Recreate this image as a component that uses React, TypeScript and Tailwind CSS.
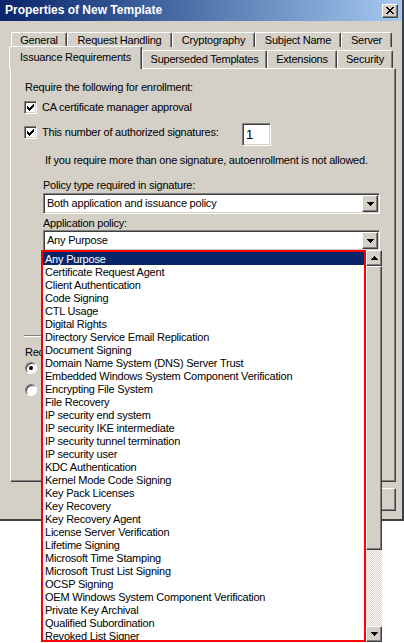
import * as React from "react";

// classic 3D borders
const RAISED =
  "border border-t-white border-l-white border-r-[#404040] border-b-[#404040] shadow-[inset_-1px_-1px_#808080]";
const SUNKEN =
  "border border-t-[#808080] border-l-[#808080] border-r-white border-b-white shadow-[inset_1px_1px_#404040,inset_-1px_-1px_#d4d0c8]";
const TAB =
  "rounded-t-[2px] border-l border-t border-r border-l-white border-t-white border-r-[#404040] shadow-[inset_-1px_0_#808080] text-center whitespace-nowrap";

const BACK_TABS = [
  {label: "General", w: "w-[56px]"},
  {label: "Request Handling", w: "w-[105px]"},
  {label: "Cryptography", w: "w-[83px]"},
  {label: "Subject Name", w: "w-[86px]"},
  {label: "Server", w: "w-[51px]"},
];

const FRONT_TABS = [
  {label: "Superseded Templates", w: "w-[125px]"},
  {label: "Extensions", w: "w-[70px]"},
  {label: "Security", w: "w-[56px]"},
];

const POLICIES = [
  "Any Purpose",
  "Certificate Request Agent",
  "Client Authentication",
  "Code Signing",
  "CTL Usage",
  "Digital Rights",
  "Directory Service Email Replication",
  "Document Signing",
  "Domain Name System (DNS) Server Trust",
  "Embedded Windows System Component Verification",
  "Encrypting File System",
  "File Recovery",
  "IP security end system",
  "IP security IKE intermediate",
  "IP security tunnel termination",
  "IP security user",
  "KDC Authentication",
  "Kernel Mode Code Signing",
  "Key Pack Licenses",
  "Key Recovery",
  "Key Recovery Agent",
  "License Server Verification",
  "Lifetime Signing",
  "Microsoft Time Stamping",
  "Microsoft Trust List Signing",
  "OCSP Signing",
  "OEM Windows System Component Verification",
  "Private Key Archival",
  "Qualified Subordination",
  "Revoked List Signer",
];

const Arrow: React.FC<{up?: boolean}> = ({up}) => (
  <svg width="7" height="4" viewBox="0 0 7 4" shapeRendering="crispEdges">
    {up ? (
      <>
        <rect x="3" y="0" width="1" height="1" />
        <rect x="2" y="1" width="3" height="1" />
        <rect x="1" y="2" width="5" height="1" />
        <rect x="0" y="3" width="7" height="1" />
      </>
    ) : (
      <>
        <rect x="0" y="0" width="7" height="1" />
        <rect x="1" y="1" width="5" height="1" />
        <rect x="2" y="2" width="3" height="1" />
        <rect x="3" y="3" width="1" height="1" />
      </>
    )}
  </svg>
);

const Checkbox: React.FC = () => (
  <div className={`${SUNKEN} flex h-[13px] w-[13px] shrink-0 items-center justify-center bg-white`}>
    <svg width="7" height="7" viewBox="0 0 7 7" shapeRendering="crispEdges">
      <path d="M0 2h1v3h-1zM1 3h1v3h-1zM2 4h1v3h-1zM3 3h1v3h-1zM4 2h1v3h-1zM5 1h1v3h-1zM6 0h1v3h-1z" fill="black" />
    </svg>
  </div>
);

const Radio: React.FC<{checked?: boolean}> = ({checked}) => (
  <div className="flex h-[12px] w-[12px] shrink-0 items-center justify-center rounded-full border border-t-[#808080] border-l-[#808080] border-r-white border-b-white bg-white shadow-[inset_1px_1px_#404040]">
    {checked && <div className="h-[4px] w-[4px] rounded-full bg-black" />}
  </div>
);

const Combo: React.FC<{value: string}> = ({value}) => (
  <div className={`${SUNKEN} ml-[19px] flex h-[21px] w-[337px] items-center bg-white p-[1px]`}>
    <span className="flex-1 pl-[2px]">{value}</span>
    <div className={`${RAISED} flex h-[17px] w-[16px] items-center justify-center bg-[#d4d0c8]`}>
      <Arrow />
    </div>
  </div>
);

// the button captions sit under the open list, so only the frames show
const PushButton: React.FC = () => <div className={`${RAISED} h-[23px] w-[75px]`} />;

export default function App() {
  return (
    <div className="relative h-[643px] w-[404px] overflow-hidden bg-white font-['Liberation_Sans',Arial,sans-serif] text-[11px] leading-[13px] tracking-[-0.22px] text-black">
      <div className="flex h-[521px] w-[404px] flex-col border-r-2 border-b-2 border-r-[#404040] border-b-[#404040] bg-[#d4d0c8]">
        {/* title bar */}
        <div className="flex h-[21px] shrink-0 items-center justify-between bg-linear-to-r from-[#0a246a] to-[#a6caf0] pr-[4px] pl-[5px]">
          <span className="text-[12px] font-bold tracking-normal text-white">Properties of New Template</span>
          <div className={`${RAISED} flex h-[14px] w-[16px] items-center justify-center bg-[#d4d0c8]`}>
            <svg width="8" height="7" viewBox="0 0 8 7" shapeRendering="crispEdges">
              <path
                d="M0 0h2v1h-2zM6 0h2v1h-2zM1 1h2v1h-2zM5 1h2v1h-2zM2 2h4v1h-4zM3 3h2v1h-2zM2 4h4v1h-4zM1 5h2v1h-2zM5 5h2v1h-2zM0 6h2v1h-2zM6 6h2v1h-2z"
                fill="black"
              />
            </svg>
          </div>
        </div>

        {/* tabs */}
        <div className="mt-[11px] ml-[11px] flex h-[15px]">
          {BACK_TABS.map((t) => (
            <div key={t.label} className={`${TAB} ${t.w} h-[15px] pt-[1px]`}>
              {t.label}
            </div>
          ))}
        </div>
        <div className="ml-[9px] flex h-[21px] items-end">
          <div className={`${TAB} relative z-10 -mb-px h-[23px] w-[133px] bg-[#d4d0c8] pt-[4px]`}>
            Issuance Requirements
          </div>
          {FRONT_TABS.map((t) => (
            <div key={t.label} className={`${TAB} ${t.w} h-[18px] pt-[2px]`}>
              {t.label}
            </div>
          ))}
        </div>

        {/* tab page */}
        <div className="mr-[6px] ml-[10px] flex h-[414px] flex-col border-t border-l border-r border-b border-t-white border-l-white border-r-[#404040] border-b-[#404040] pl-[13px] shadow-[inset_-1px_-1px_#808080]">
          <div className="mt-[12px] pl-px">Require the following for enrollment:</div>
          <div className="mt-[7px] flex items-center gap-[5px]">
            <Checkbox />
            <span>CA certificate manager approval</span>
          </div>
          <div className="mt-[9px] flex h-[23px] items-start gap-[5px]">
            <div className="mt-[3px]">
              <Checkbox />
            </div>
            <span className="mt-[3px] w-[195px]">This number of authorized signatures:</span>
            <div className={`${SUNKEN} flex h-[23px] w-[29px] items-center bg-white pl-[3px] text-[13px]`}>1</div>
          </div>
          <div className="mt-[8px] ml-[21px]">
            If you require more than one signature, autoenrollment is not allowed.
          </div>
          <div className="mt-[12px] ml-[19px]">Policy type required in signature:</div>
          <div className="mt-[1px]">
            <Combo value="Both application and issuance policy" />
          </div>
          <div className="mt-[3px] ml-[19px]">Application policy:</div>
          <Combo value="Any Purpose" />

          {/* reenrollment group: only its left edge shows beside the open list */}
          <div className="w-[20px] overflow-hidden">
            <div className="mt-[84px] h-[2px] w-[356px] border-t border-b border-t-[#808080] border-b-white" />
            <div className="mt-[9px] pl-px whitespace-nowrap">Rec</div>
            <div className="mt-[3px] pl-px">
              <Radio checked />
            </div>
            <div className="mt-[10px] pl-px">
              <Radio />
            </div>
          </div>
        </div>

        {/* dialog buttons */}
        <div className="mt-[6px] mr-[6px] flex justify-end gap-[6px]">
          <PushButton />
          <PushButton />
          <PushButton />
          <PushButton />
        </div>
      </div>

      {/* open drop-down list */}
      <div className="absolute top-[250px] left-[41px] flex h-[392px] w-[341px]">
        <ul className="h-full w-[325px] overflow-hidden border-2 border-[#ff0000] bg-white">
          {POLICIES.map((p, i) => (
            <li
              key={p}
              className={`h-[13px] pt-px pl-[2px] leading-[12px] whitespace-nowrap ${i === 0 ? "bg-[#0a246a] text-white" : ""}`}
            >
              {p}
            </li>
          ))}
        </ul>
        <div className="flex h-full w-[16px] flex-col">
          <div className={`${RAISED} flex h-[16px] items-center justify-center bg-[#d4d0c8]`}>
            <Arrow up />
          </div>
          <div className={`${RAISED} h-[284px] bg-[#d4d0c8]`} />
          <div className="flex-1 bg-[repeating-conic-gradient(#d4d0c8_0%_25%,#ffffff_0%_50%)] bg-[length:2px_2px]" />
          <div className={`${RAISED} flex h-[16px] items-center justify-center bg-[#d4d0c8]`}>
            <Arrow />
          </div>
        </div>
      </div>
    </div>
  );
}
